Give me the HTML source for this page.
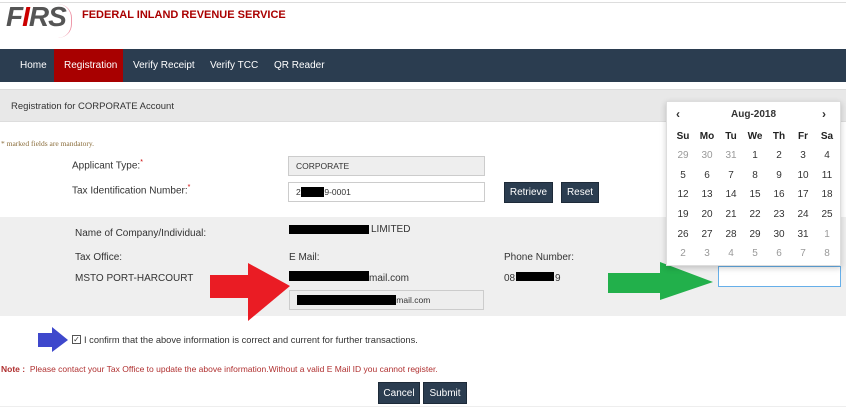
<!DOCTYPE html>
<html><head><meta charset="utf-8"><style>
*{margin:0;padding:0;box-sizing:border-box}
body{width:846px;height:408px;background:#fff;font-family:"Liberation Sans",Arial,sans-serif;font-size:10px;color:#333;position:relative;overflow:hidden}
.a{position:absolute}
.nav{left:0;top:49px;width:846px;height:33px;background:#2b3d50}
.nav span{position:absolute;top:11px;color:#fff;font-size:10px}
.btn{position:absolute;background:#2b3d50;color:#fff;font-size:10px;text-align:center;border:1px solid #1d2a38}
.inp{position:absolute;border:1px solid #ccc;background:#fff;font-size:8.5px;padding-left:7px}
.blk{position:absolute;background:#000}
.cal{left:666px;top:101px;width:175px;height:165px;background:#fff;border:1px solid #ddd;box-shadow:0 2px 6px rgba(0,0,0,.2)}
.cal table{position:absolute;left:4px;top:25px;border-collapse:collapse}
.cal td{width:24px;height:19.6px;text-align:center;font-size:10px;color:#333}
.cal th{width:24px;height:19px;font-size:10px;font-weight:bold;color:#222}
.cal .g{color:#999}
</style></head><body>
<div class="a" style="left:0;top:2px;width:846px;height:1px;background:#ddd"></div>
<div class="a" style="left:6px;top:1px;font:italic bold 28px 'Liberation Sans',sans-serif;color:#555;letter-spacing:-1px">F<span style="color:#c00">I</span>RS</div>
<div class="a" style="left:58px;top:4px;width:14px;height:34px;border-right:1px solid #e9a;border-radius:0 20px 20px 0"></div>
<div class="a" style="left:82px;top:9px;font-weight:bold;font-size:11px;color:#a00">FEDERAL INLAND REVENUE SERVICE</div>
<div class="a nav">
<div class="a" style="left:54px;top:0;width:69px;height:33px;background:#a80000"></div>
<span style="left:20px">Home</span><span style="left:64px">Registration</span><span style="left:133px">Verify Receipt</span><span style="left:210px">Verify TCC</span><span style="left:274px">QR Reader</span></div>
<div class="a" style="left:0;top:89px;width:846px;height:33px;background:#e8e8e8;border-top:1px solid #ddd;border-bottom:1px solid #ddd"></div>
<div class="a" style="left:11px;top:101px;font-size:9.5px;color:#333">Registration for CORPORATE Account</div>
<div class="a" style="left:1px;top:139px;font:7.5px 'Liberation Serif',serif;color:#8a6d3b">* marked fields are mandatory.</div>
<div class="a" style="left:72px;top:159px">Applicant Type:<sup style="color:#c00;font-size:7px">*</sup></div>
<div class="a" style="left:72px;top:184px">Tax Identification Number:<sup style="color:#c00;font-size:7px">*</sup></div>
<div class="inp" style="left:288px;top:156px;width:197px;height:20px;background:#eee;line-height:18px">CORPORATE</div>
<div class="inp" style="left:288px;top:182px;width:197px;height:20px;line-height:18px">2<span style="background:#000;color:#000">00000</span>9-0001</div>
<div class="btn" style="left:504px;top:182px;width:49px;height:21px;line-height:20px">Retrieve</div>
<div class="btn" style="left:561px;top:182px;width:38px;height:21px;line-height:20px">Reset</div>
<div class="a" style="left:0;top:217px;width:846px;height:99px;background:#efefef"></div>
<div class="a" style="left:75px;top:228px">Name of Company/Individual:</div>
<div class="blk" style="left:289px;top:225px;width:80px;height:9px"></div>
<div class="a" style="left:371px;top:224px">LIMITED</div>
<div class="a" style="left:75px;top:252px">Tax Office:</div>
<div class="a" style="left:289px;top:252px">E Mail:</div>
<div class="a" style="left:504px;top:252px">Phone Number:</div>
<div class="a" style="left:75px;top:273px">MSTO PORT-HARCOURT</div>
<div class="blk" style="left:289px;top:271px;width:80px;height:10px"></div>
<div class="a" style="left:369px;top:273px">mail.com</div>
<div class="a" style="left:504px;top:273px">08</div>
<div class="blk" style="left:516px;top:272px;width:38px;height:9px"></div>
<div class="a" style="left:555px;top:273px">9</div>
<div class="inp" style="left:289px;top:290px;width:195px;height:20px;background:#eee;line-height:18px;font-size:8.5px"><span style="background:#000;color:#000">000000000000000000000</span>mail.com</div>
<svg class="a" style="left:0;top:0" width="846" height="408">
<polygon points="210,275 248,275 248,263 290,286 248,321 248,298 210,298" fill="#ea1c24"/>
<polygon points="608,273 660,273 660,262 713,282 660,300 660,293 608,293" fill="#22b04b"/>
<polygon points="38,333 52,333 52,327 68,340 52,352 52,347 38,347" fill="#3e48cc"/>
</svg>
<div class="a" style="left:72px;top:335px;width:9px;height:9px;border:1px solid #555;font-size:8px;line-height:7px;text-align:center">✓</div>
<div class="a" style="left:84px;top:335px;font-size:9.3px">I confirm that the above information is correct and current for further transactions.</div>
<div class="a" style="left:1px;top:364px;font-size:8.5px;color:#b03030"><b>Note :</b>&nbsp; Please contact your Tax Office to update the above information.Without a valid E Mail ID you cannot register.</div>
<div class="btn" style="left:378px;top:382px;width:42px;height:22px;line-height:21px">Cancel</div>
<div class="btn" style="left:423px;top:382px;width:44px;height:22px;line-height:21px">Submit</div>
<div class="a" style="left:0;top:406px;width:846px;height:1px;background:#eee"></div>
<div class="inp" style="left:718px;top:266px;width:123px;height:21px;border-color:#66afe9"></div>
<div class="a cal">
<div class="a" style="left:9px;top:5px;font-weight:bold;font-size:12px">‹</div>
<div class="a" style="left:64px;top:7px;font-weight:bold;font-size:10px">Aug-2018</div>
<div class="a" style="left:155px;top:5px;font-weight:bold;font-size:12px">›</div>
<table>
<tr><th>Su</th><th>Mo</th><th>Tu</th><th>We</th><th>Th</th><th>Fr</th><th>Sa</th></tr>
<tr><td class="g">29</td><td class="g">30</td><td class="g">31</td><td>1</td><td>2</td><td>3</td><td>4</td></tr>
<tr><td>5</td><td>6</td><td>7</td><td>8</td><td>9</td><td>10</td><td>11</td></tr>
<tr><td>12</td><td>13</td><td>14</td><td>15</td><td>16</td><td>17</td><td>18</td></tr>
<tr><td>19</td><td>20</td><td>21</td><td>22</td><td>23</td><td>24</td><td>25</td></tr>
<tr><td>26</td><td>27</td><td>28</td><td>29</td><td>30</td><td>31</td><td class="g">1</td></tr>
<tr><td class="g">2</td><td class="g">3</td><td class="g">4</td><td class="g">5</td><td class="g">6</td><td class="g">7</td><td class="g">8</td></tr>
</table></div>
</body></html>
